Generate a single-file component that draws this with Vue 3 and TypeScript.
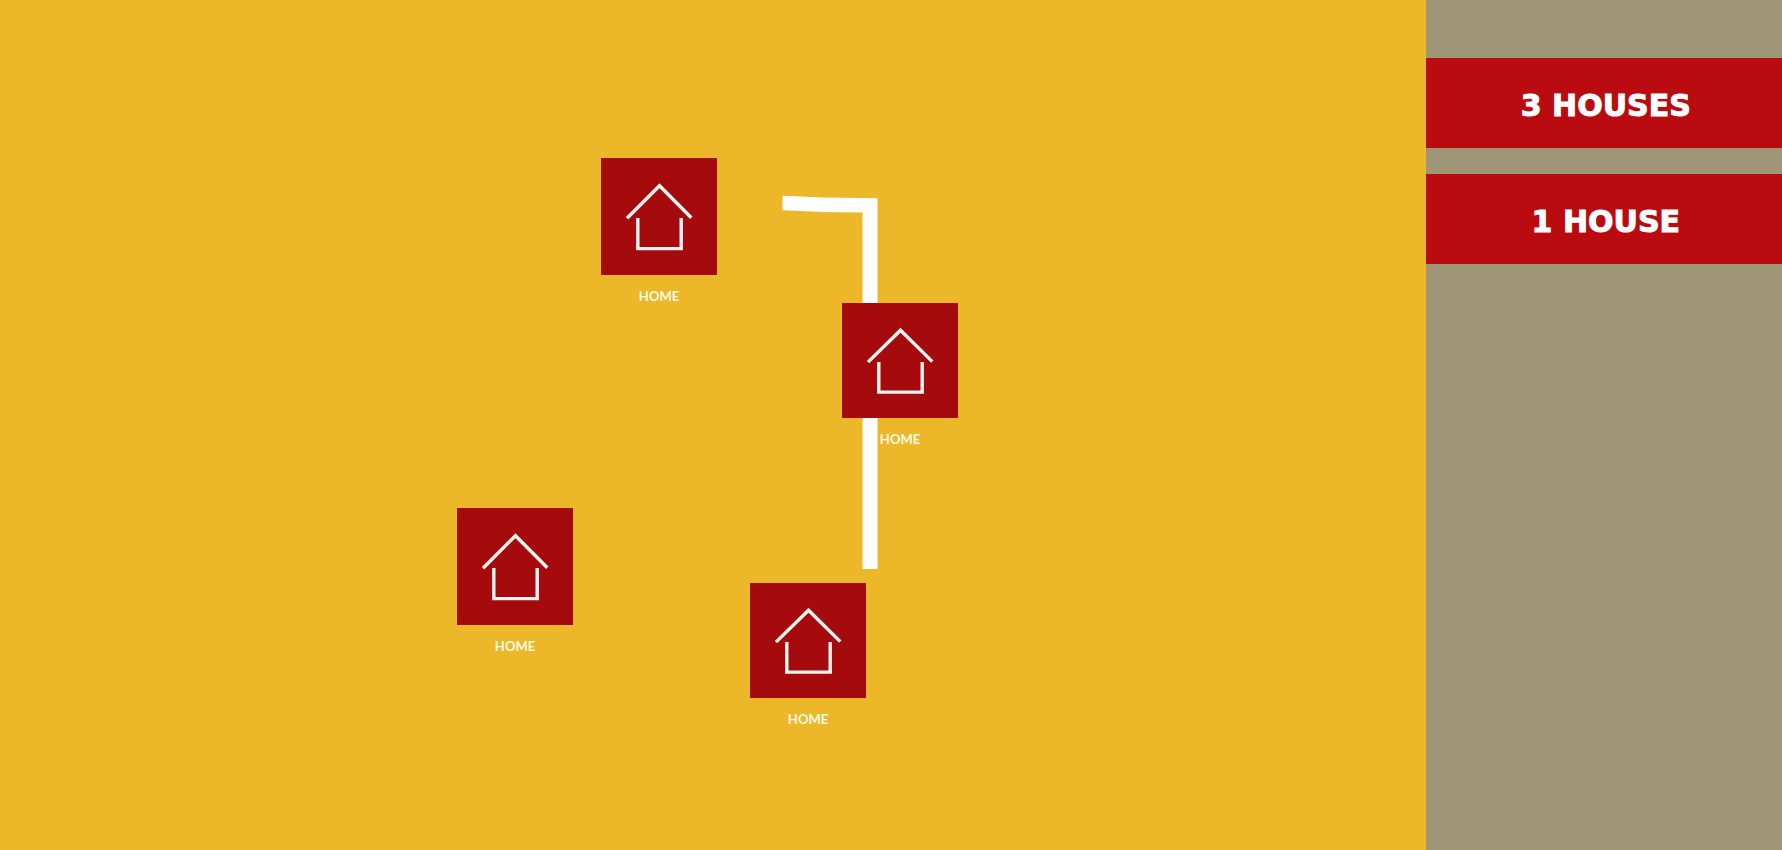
<script setup lang="ts">
import { ref } from 'vue'

interface HouseNode {
  id: number
  x: number
  y: number
  height: number
  label: string
}

const houses = ref<HouseNode[]>([
  { id: 1, x: 601, y: 158, height: 117, label: 'HOME' },
  { id: 2, x: 842, y: 303, height: 115, label: 'HOME' },
  { id: 3, x: 457, y: 508, height: 117, label: 'HOME' },
  { id: 4, x: 750, y: 583, height: 115, label: 'HOME' },
])

const options: string[] = ['3 HOUSES', '1 HOUSE']
</script>

<template>
  <div class="layout">
    <main class="board">
      <svg class="road" viewBox="0 0 96 376" aria-hidden="true">
        <path d="M.5 .8 L42 2.600 L95.500 3.300 V374 H80.500 V17.500 L42 17 L.5 15.300 Z" fill="#fff" />
      </svg>
      <figure
        v-for="house in houses"
        :key="house.id"
        class="house"
        :style="{ left: house.x + 'px', top: house.y + 'px' }"
      >
        <svg
          class="tile"
          viewBox="0 0 116 117"
          preserveAspectRatio="none"
          :height="house.height"
          aria-hidden="true"
        >
          <rect width="116" height="117" fill="#a50a0d" />
          <g fill="none" stroke="#fff4f2" stroke-width="3.400">
            <path d="M26 60.200 L58.500 27.700 L90.300 59.700" />
            <path d="M36.800 60 V90.600 H80.200 V60" />
          </g>
        </svg>
        <figcaption class="label">{{ house.label }}</figcaption>
      </figure>
    </main>
    <aside class="sidebar">
      <button v-for="option in options" :key="option" type="button" class="option">
        {{ option }}
      </button>
    </aside>
  </div>
</template>

<style scoped>
.layout {
  display: grid;
  grid-template-columns: 4fr 1fr;
  min-height: 100vh;
}

.board {
  position: relative;
  overflow: hidden;
  background: #ecb82a;
}

.road {
  position: absolute;
  left: 782px;
  top: 195px;
  width: 96px;
  height: 376px;
}

.house {
  position: absolute;
  width: 116px;
  margin: 0;
}

.tile {
  display: block;
  width: 100%;
}

.label {
  margin-top: 11px;
  color: #fffbe6;
  font: 700 13px/20px Lato, sans-serif;
  text-align: center;
}

.sidebar {
  display: flex;
  flex-direction: column;
  gap: 26px;
  padding-top: 58px;
  background: #9f9678;
}

.option {
  width: 100%;
  min-height: 90px;
  padding: 6px 0 0 4px;
  border: 0;
  background: #ba0b10;
  color: #fff;
  font: 700 30px/40px "DejaVu Sans", Verdana, sans-serif;
  -webkit-text-stroke: 1px #fff;
  text-align: center;
  cursor: pointer;
}
</style>

<style>
body {
  margin: 0;
}
</style>
